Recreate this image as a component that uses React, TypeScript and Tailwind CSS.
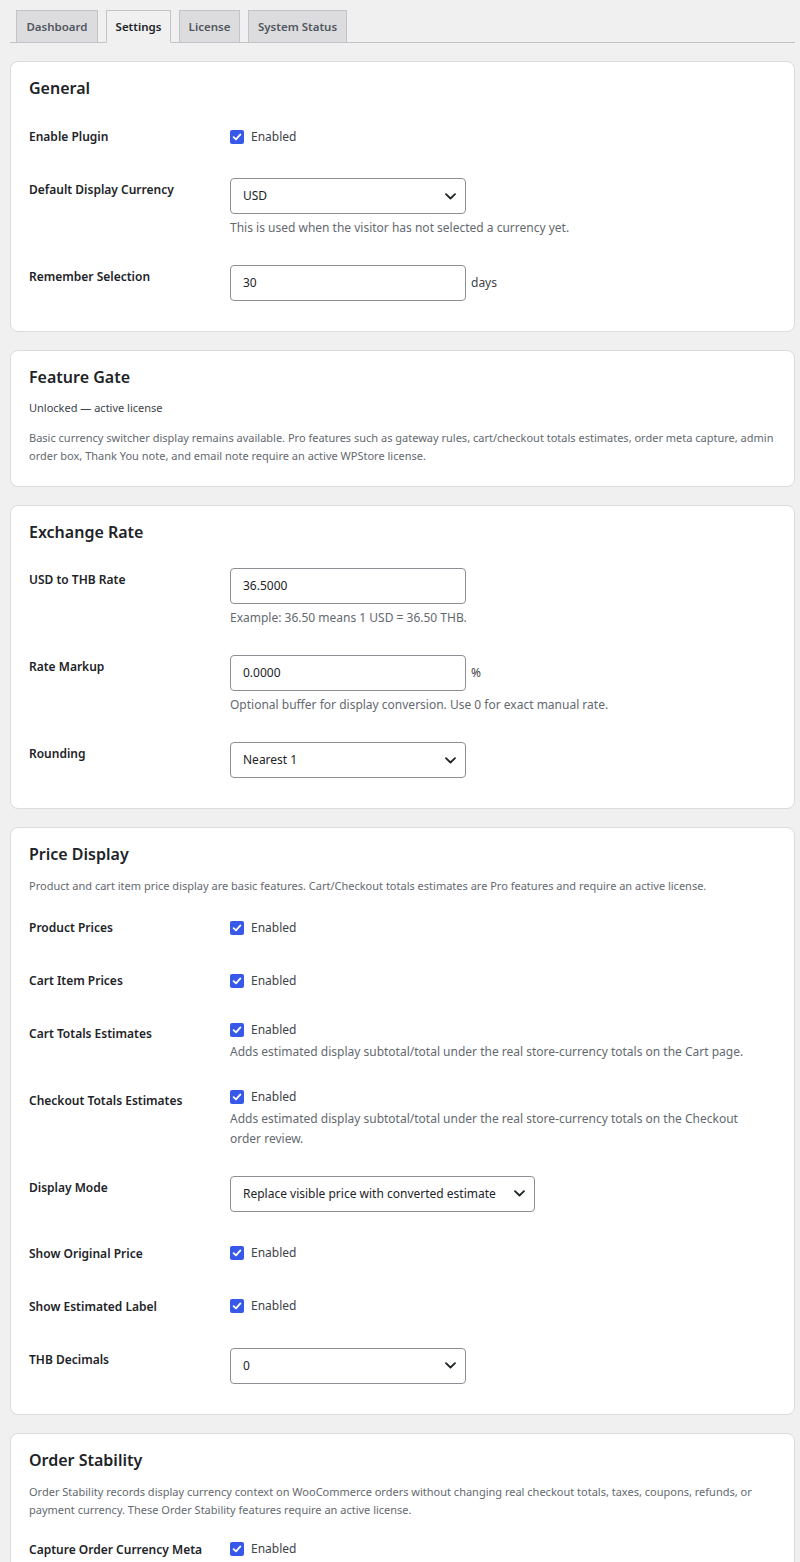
import type { ReactNode } from "react";

const tabs = [
    { name: "Dashboard", active: false, width: "w-[82px]" },
    { name: "Settings", active: true, width: "w-[65px]" },
    { name: "License", active: false, width: "w-[61px]" },
    { name: "System Status", active: false, width: "w-[99px]" },
];

function Chevron() {
    return (
        <svg width="11" height="7" viewBox="0 0 11 7" className="shrink-0">
            <path d="M1 1.2 L5.5 5.5 L10 1.2" stroke="#1d2327" strokeWidth="1.8" fill="none" strokeLinecap="round" strokeLinejoin="round" />
        </svg>
    );
}

function Checkbox() {
    return (
        <span className="inline-flex h-[14px] w-[14px] shrink-0 items-center justify-center rounded-[2px] bg-[#3858e9]">
            <svg width="10" height="10" viewBox="0 0 10 10">
                <path d="M1.6 5.2 L4 7.4 L8.4 2.4" stroke="white" strokeWidth="1.8" fill="none" strokeLinecap="round" strokeLinejoin="round" />
            </svg>
        </span>
    );
}

function Select({ value, width = "w-[236px]" }: { value: string; width?: string }) {
    return (
        <div className={`flex h-[36px] ${width} items-center justify-between rounded-[4px] border border-[#8c8f94] bg-white pl-[12px] pr-[9px] text-[12px] text-[#1d2327]`}>
            <span>{value}</span>
            <Chevron />
        </div>
    );
}

function TextInput({ value, suffix }: { value: string; suffix?: string }) {
    return (
        <div className="flex items-center gap-[5px]">
            <div className="flex h-[36px] w-[236px] items-center rounded-[4px] border border-[#8c8f94] bg-white pl-[12px] text-[12px] text-[#1d2327]">
                {value}
            </div>
            {suffix && <span className="text-[12px] text-[#3c434a]">{suffix}</span>}
        </div>
    );
}

function Desc({ children }: { children: ReactNode }) {
    return <p className="mt-[4px] max-w-[525px] text-[12px] leading-[19.5px] text-[#646970]">{children}</p>;
}

function Row({ label, desc, children }: { label: string; desc?: boolean; children: ReactNode }) {
    return (
        <div className="flex">
            <div className="w-[201px] shrink-0 pt-[18px] text-[12px] font-semibold leading-[17px] text-[#1d2327]">{label}</div>
            <div className={desc ? "pt-[15px] pb-[12.5px]" : "py-[15px]"}>{children}</div>
        </div>
    );
}

function CheckRow({ label, desc }: { label: string; desc?: string }) {
    if (desc) {
        return (
            <Row label={label} desc>
                <div className="flex h-[16px] items-center gap-[7px] text-[12px] text-[#3c434a]">
                    <Checkbox /> Enabled
                </div>
                <Desc>{desc}</Desc>
            </Row>
        );
    }
    return (
        <Row label={label}>
            <div className="flex h-[23px] items-center gap-[7px] text-[12px] text-[#3c434a]">
                <Checkbox /> Enabled
            </div>
        </Row>
    );
}

function Card({ title, children, className = "" }: { title: string; children: ReactNode; className?: string }) {
    return (
        <section className={`mt-[18px] rounded-[8px] border border-[#dcdcde] bg-white px-[18px] pt-[14px] ${className}`}>
            <h2 className="text-[16px] font-semibold leading-[24px] text-[#1d2327]">{title}</h2>
            {children}
        </section>
    );
}

export default function App() {
    return (
        <div className="min-h-screen bg-[#f0f0f1] pl-[10px] pr-[5px] pb-[40px] font-['Noto_Sans',sans-serif]">
            <nav className="flex gap-[8px] border-b border-[#c3c4c7] pl-[6px] pt-[10px]">
                {tabs.map((tab) => (
                    <div
                        key={tab.name}
                        className={
                            tab.active
                                ? `-mb-px flex h-[33px] ${tab.width} items-center justify-center border border-[#c3c4c7] border-b-[#f0f0f1] bg-[#f0f0f1] text-[11.5px] font-semibold text-[#1d2327]`
                                : `-mb-px flex h-[33px] ${tab.width} items-center justify-center border border-[#c3c4c7] bg-[#dcdcde] text-[11.5px] font-semibold text-[#50575e]`
                        }
                    >
                        {tab.name}
                    </div>
                ))}
            </nav>

            <Card title="General" className="pb-[15px]">
                <div className="mt-[10px]">
                    <CheckRow label="Enable Plugin" />
                    <Row label="Default Display Currency" desc>
                        <Select value="USD" />
                        <Desc>This is used when the visitor has not selected a currency yet.</Desc>
                    </Row>
                    <Row label="Remember Selection">
                        <TextInput value="30" suffix="days" />
                    </Row>
                </div>
            </Card>

            <Card title="Feature Gate" className="pb-[21px]">
                <p className="mt-[10px] text-[11px] leading-[18px] text-[#3c434a]">Unlocked — active license</p>
                <p className="mt-[12px] text-[11px] leading-[18px] text-[#646970]">
                    Basic currency switcher display remains available. Pro features such as gateway rules, cart/checkout totals estimates, order meta capture, admin
                    <br />
                    order box, Thank You note, and email note require an active WPStore license.
                </p>
            </Card>

            <Card title="Exchange Rate" className="pb-[15px]">
                <div className="mt-[9px]">
                    <Row label="USD to THB Rate" desc>
                        <TextInput value="36.5000" />
                        <Desc>Example: 36.50 means 1 USD = 36.50 THB.</Desc>
                    </Row>
                    <Row label="Rate Markup" desc>
                        <TextInput value="0.0000" suffix="%" />
                        <Desc>Optional buffer for display conversion. Use 0 for exact manual rate.</Desc>
                    </Row>
                    <Row label="Rounding">
                        <Select value="Nearest 1" />
                    </Row>
                </div>
            </Card>

            <Card title="Price Display" className="pb-[15px]">
                <p className="mt-[11px] text-[11px] leading-[18px] text-[#646970]">
                    Product and cart item price display are basic features. Cart/Checkout totals estimates are Pro features and require an active license.
                </p>
                <div className="mt-[6px]">
                    <CheckRow label="Product Prices" />
                    <CheckRow label="Cart Item Prices" />
                    <CheckRow label="Cart Totals Estimates" desc="Adds estimated display subtotal/total under the real store-currency totals on the Cart page." />
                    <CheckRow label="Checkout Totals Estimates" desc="Adds estimated display subtotal/total under the real store-currency totals on the Checkout order review." />
                    <Row label="Display Mode">
                        <Select value="Replace visible price with converted estimate" width="w-[305px]" />
                    </Row>
                    <CheckRow label="Show Original Price" />
                    <CheckRow label="Show Estimated Label" />
                    <Row label="THB Decimals">
                        <Select value="0" />
                    </Row>
                </div>
            </Card>

            <Card title="Order Stability" className="pb-[15px]">
                <p className="mt-[11px] text-[11px] leading-[18px] text-[#646970]">
                    Order Stability records display currency context on WooCommerce orders without changing real checkout totals, taxes, coupons, refunds, or payment currency. These Order Stability features require an active license.
                </p>
                <div className="mt-[4px]">
                    <CheckRow label="Capture Order Currency Meta" />
                </div>
            </Card>
        </div>
    );
}
